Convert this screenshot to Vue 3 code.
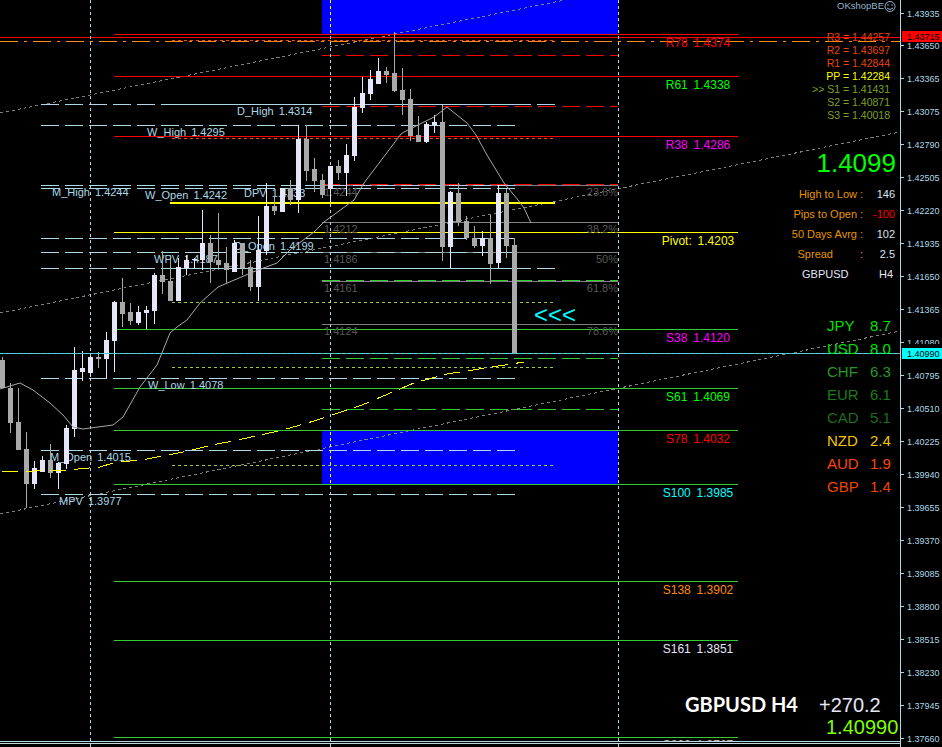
<script setup>
// levels: y, from, to, colour, dash pattern (empty = solid), width
const DASH = '18 6'
const DOT = '3 3'
const levels = [
  // fibonacci greys
  [185.5, 322, 618, '#808080', ''], [222.5, 322, 618, '#808080', ''], [252.5, 322, 618, '#808080', ''],
  [281.5, 322, 618, '#808080', ''], [324.5, 322, 618, '#808080', ''],
  // highs / lows / opens
  [104.5, 41, 161, '#add8e6', DASH], [104.5, 161, 531, '#add8e6', ''], [104.5, 537, 555, '#add8e6', ''],
  [125.5, 41, 515, '#add8e6', DASH], [185.5, 41, 515, '#add8e6', DASH], [188.5, 41, 515, '#add8e6', DASH],
  [238.5, 41, 515, '#add8e6', DASH], [252.5, 41, 515, '#add8e6', DASH],
  [268.5, 41, 161, '#add8e6', DASH], [268.5, 161, 531, '#add8e6', ''], [268.5, 537, 555, '#add8e6', ''],
  [378.5, 41, 515, '#add8e6', DASH], [450.5, 41, 515, '#add8e6', DASH], [494.5, 41, 515, '#add8e6', DASH],
  // reds
  [34.5, 114, 738, '#ff0000', ''], [37.5, 0, 900, '#ff0000', ''], [76.5, 114, 738, '#ff0000', ''],
  [136.5, 114, 738, '#ff0000', ''], [55.5, 322, 618, '#ff0000', DASH], [106.5, 322, 618, '#ff0000', DASH],
  [184.5, 322, 618, '#ff0000', DASH],
  [41.5, 0, 900, '#ff8c1a', '18 6 3 6'], [40.5, 172, 555, '#ff4500', DOT], [138.5, 172, 555, '#ff4500', DOT],
  // yellows
  [203, 170, 555, '#ffff00', '', 2], [232.5, 114, 738, '#ffff00', ''],
  [302.5, 172, 555, '#9acd32', DOT], [367.5, 322, 555, '#9acd32', DOT], [367.5, 172, 322, '#9acd32', DOT],
  [465.5, 172, 555, '#9acd32', DOT],
  // greens
  [280.5, 322, 618, '#32cd32', DASH], [358.5, 322, 618, '#32cd32', DASH], [409.5, 322, 618, '#32cd32', DASH],
  [329.5, 114, 738, '#32cd32', ''], [388.5, 114, 738, '#32cd32', ''], [430.5, 114, 738, '#32cd32', ''],
  [484.5, 114, 738, '#32cd32', ''], [581.5, 114, 738, '#32cd32', ''], [640.5, 114, 738, '#32cd32', ''],
  [737.5, 114, 738, '#32cd32', ''],
]

const trends = [
  [0, 113, 565, 0], [0, 313, 900, 132], [0, 514, 900, 331],
]

// names right on the chart, under the candles
const leftLabels = [
  ['D_High 1.4314', 237, 115], ['W_High 1.4295', 147, 136], ['M_High 1.4244', 52, 196],
  ['W_Open 1.4242', 145, 199], ['DPV 1.4233', 244, 197], ['D_Open 1.4199', 234, 250],
  ['WPV 1.4187', 154, 263], ['W_Low 1.4078', 148, 389], ['M_Open 1.4015', 50, 461],
  ['MPV 1.3977', 59, 505],
]

const fibs = [
  ['1.4244', '23.6%', 196], ['1.4212', '38.2%', 233], ['1.4186', '50%', 263],
  ['1.4161', '61.8%', 292], ['1.4124', '78.6%', 335],
]

const pivots = [
  ['R78 1.4374', 47, '#ff0000'], ['R61 1.4338', 89, '#00ff00'], ['R38 1.4286', 149, '#ff00ff'],
  ['Pivot: 1.4203', 245, '#ffff00'], ['S38 1.4120', 342, '#ff00ff'], ['S61 1.4069', 401, '#00ff00'],
  ['S78 1.4032', 443, '#ff0000'], ['S100 1.3985', 497, '#00ffff'], ['S138 1.3902', 594, '#ff8c00'],
  ['S161 1.3851', 653, '#e6e6fa'], ['S200 1.3767', 749, '#d2b48c'],
]

// scale labels, one every 33px or so
const scale = [
  '1.43935', '1.43650', '1.43365', '1.43075', '1.42790', '1.42505', '1.42220', '1.41935',
  '1.41650', '1.41365', '1.41080', '1.40795', '1.40510', '1.40225', '1.39940', '1.39655',
  '1.39370', '1.39085', '1.38800', '1.38515', '1.38230', '1.37945', '1.37660',
].map((text, i) => ({ text, y: Math.round(12.5 + i * 32.98) + 0.5 }))

// kind, body top, body bottom, wick top, wick bottom (first at x=2, every 8px)
const rows = [
  ['g', 360, 388, 357, 388], ['g', 388, 423, 383, 433], ['g', 422, 450, 388, 450], ['g', 449, 484, 432, 508],
  ['w', 468, 484, 461, 489], ['w', 460, 472, 456, 472], ['g', 460, 473, 444, 478], ['w', 463, 473, 462, 489],
  ['w', 428, 464, 425, 469], ['w', 370, 429, 347, 437], ['w', 368, 372, 351, 381], ['w', 357, 373, 356, 377],
  ['g', 357, 359, 352, 368], ['w', 340, 359, 332, 378], ['w', 302, 341, 301, 372], ['g', 302, 314, 278, 327],
  ['g', 312, 321, 303, 325], ['w', 312, 323, 306, 325], ['w', 310, 313, 306, 329], ['w', 275, 311, 273, 324],
  ['g', 275, 282, 251, 294], ['g', 281, 301, 255, 301], ['w', 267, 301, 258, 301], ['w', 260, 268, 255, 275],
  ['w', 259, 260, 258, 268], ['w', 243, 260, 210, 270], ['g', 243, 262, 235, 283], ['g', 260, 265, 213, 268],
  ['g', 263, 270, 247, 283], ['w', 243, 272, 240, 272], ['g', 243, 268, 243, 275], ['g', 267, 287, 260, 291],
  ['w', 250, 287, 216, 301], ['w', 206, 251, 183, 255], ['g', 206, 211, 197, 215], ['w', 188, 212, 188, 212],
  ['g', 188, 200, 180, 205], ['w', 139, 200, 125, 213], ['g', 139, 171, 125, 181], ['g', 169, 181, 158, 192],
  ['g', 180, 195, 174, 198], ['w', 166, 189, 166, 203], ['g', 166, 173, 160, 180], ['w', 155, 173, 144, 196],
  ['w', 107, 156, 97, 161], ['w', 93, 108, 77, 113], ['w', 79, 94, 70, 100], ['w', 71, 84, 58, 84],
  ['g', 71, 75, 67, 83], ['g', 73, 91, 32, 92], ['g', 90, 100, 68, 115], ['g', 99, 136, 89, 141],
  ['g', 135, 142, 116, 142], ['w', 124, 142, 122, 143], ['w', 122, 125, 115, 133], ['g', 122, 247, 105, 261],
  ['w', 192, 247, 191, 268], ['g', 193, 222, 183, 226], ['g', 221, 238, 216, 240], ['g', 238, 246, 226, 248],
  ['w', 238, 246, 231, 256], ['g', 238, 264, 215, 284], ['w', 193, 263, 185, 268], ['g', 193, 246, 189, 258],
  ['g', 245, 353, 238, 353],
]
const candles = rows.map((r, i) => ({
  x: 2 + i * 8, color: r[0] === 'w' ? '#e6e6fa' : '#a9a9a9', top: r[1], bottom: r[2], high: r[3], low: r[4],
}))

const maLine = '0,389 10,386 20,383 33,390 50,403 63,415 73,427 83,429 113,425 123,417 140,387 157,365 170,333 177,327 187,320 200,303 218,287 253,272 277,263 290,250 314,232 324,222 354,200 364,183 401,134 404,132 434,117 447,107 467,123 476,135 487,155 504,183 518,200 524,208 531,223'
const yellowLine = '2,472 67,470 100,467 113,463 147,459 183,452 217,444 233,441 283,430 307,423 314,421 362,405 414,383 447,374 524,362'

const pivotList = [
  ['R3 = 1.44257', 'res'], ['R2 = 1.43697', 'res'], ['R1 = 1.42844', 'res'], ['PP = 1.42284', 'pp'],
  ['>> S1 = 1.41431', 'sup'], ['S2 = 1.40871', 'sup'], ['S3 = 1.40018', 'sup'],
]

const stats = [
  { label: 'High to Low', value: '146' },
  { label: 'Pips to Open', value: '-100', neg: true },
  { label: '50 Days Avrg', value: '102' },
  { label: 'Spread', value: '2.5', short: true },
]

const strength = [
  ['JPY', '8.7', '#00e000'], ['USD', '8.0', '#00e000'], ['CHF', '6.3', '#229a22'], ['EUR', '6.1', '#1c7a1c'],
  ['CAD', '5.1', '#1c6e1c'], ['NZD', '2.4', '#f5c400'], ['AUD', '1.9', '#ff4500'], ['GBP', '1.4', '#f04500'],
]
</script>

<template>
  <div class="chart">
    <svg class="plot" width="942" height="747" viewBox="0 0 942 747">
      <rect x="322" y="0" width="296" height="34" fill="#0000ff" />
      <rect x="322" y="431" width="296" height="53" fill="#0000ff" />

      <g class="lines">
        <line v-for="(t, i) in trends" :key="'t' + i" :x1="t[0]" :y1="t[1]" :x2="t[2]" :y2="t[3]" stroke="#808080" stroke-dasharray="3 3" />
        <line v-for="(l, i) in levels" :key="'l' + i" :x1="l[1]" :x2="l[2]" :y1="l[0]" :y2="l[0]" :stroke="l[3]" :stroke-dasharray="l[4] || null" :stroke-width="l[5] || 1" />
      </g>

      <text v-for="l in leftLabels" :key="l[0]" class="name" :x="l[1]" :y="l[2]">{{ l[0] }}</text>
      <g v-for="f in fibs" :key="f[0]" class="fib">
        <text x="324" :y="f[2]">{{ f[0] }}</text>
        <text x="618" :y="f[2]" text-anchor="end">{{ f[1] }}</text>
      </g>
      <text v-for="p in pivots" :key="p[0]" class="level" x="698" :y="p[1]" :fill="p[2]" text-anchor="middle">{{ p[0] }}</text>

      <!-- bottom edge of the window hides the last label -->
      <rect x="0" y="742" width="900" height="5" fill="#000" />
      <line x1="0" x2="900" y1="741.5" y2="741.5" stroke="#add8e6" />
      <line x1="0" x2="900" y1="743.5" y2="743.5" stroke="#c4d4d8" />

      <g class="lines">
        <line x1="90.5" x2="90.5" y1="0" y2="747" stroke="#add8e6" stroke-dasharray="3 3" />
        <line x1="330.5" x2="330.5" y1="0" y2="747" stroke="#add8e6" stroke-dasharray="3 3" />
        <line x1="330.5" x2="330.5" y1="0" y2="34" stroke="#ffff00" stroke-dasharray="3 3" />
        <line x1="330.5" x2="330.5" y1="432" y2="484" stroke="#ffff00" stroke-dasharray="3 3" />
        <line x1="618.5" x2="618.5" y1="0" y2="747" stroke="#add8e6" stroke-dasharray="3 3" />
      </g>

      <g v-for="c in candles" :key="c.x" class="lines">
        <rect :x="c.x" :y="c.high" width="1" :height="c.low - c.high" :fill="c.color" />
        <rect :x="c.x - 2" :y="c.top" width="5" :height="c.bottom - c.top" :fill="c.color" />
      </g>

      <polyline :points="maLine" fill="none" stroke="#a9a9a9" />
      <polyline class="lines" :points="yellowLine" fill="none" stroke="#ffff00" stroke-dasharray="16 8" />

      <g class="lines">
        <line x1="0" x2="900" y1="353.5" y2="353.5" stroke="#a0a0a0" />
        <line x1="0" x2="900" y1="353.5" y2="353.5" stroke="#00ffff" stroke-dasharray="3 3" />
        <line x1="900.5" x2="900.5" y1="0" y2="747" stroke="#add8e6" />
        <line v-for="s in scale" :key="s.text" x1="900" x2="904" :y1="s.y" :y2="s.y" stroke="#add8e6" />
      </g>
      <text v-for="s in scale" :key="'s' + s.text" class="tick" x="907" :y="s.y + 3.5">{{ s.text }}</text>

      <!-- current price and last high tags -->
      <rect x="901" y="344" width="41" height="17" fill="#000" />
      <rect x="902" y="348" width="40" height="11" fill="#00ffff" />
      <text class="tick tag" x="907" y="357">1.40990</text>
      <rect x="902" y="31" width="40" height="11" fill="#ff0000" />
      <text class="tick tag" x="907" y="40">1.43715</text>

      <text class="arrows" x="534" y="323">&lt;&lt;&lt;</text>

      <text class="brand" x="837" y="9">OKshopBE</text>
      <g fill="none" stroke="#8fb4d0">
        <circle cx="890" cy="6.5" r="5" />
        <path d="M887 8 Q890 11 893 8" />
      </g>
      <circle cx="888" cy="5" r="0.8" fill="#8fb4d0" />
      <circle cx="892" cy="5" r="0.8" fill="#8fb4d0" />

      <text class="pair" x="685" y="712">GBPUSD H4</text>
      <text class="gain" x="819" y="712">+270.2</text>
      <text class="last" x="826" y="734">1.40990</text>
    </svg>

    <div class="pivots">
      <div v-for="p in pivotList" :key="p[0]" :class="p[1]">{{ p[0] }}</div>
    </div>

    <div class="price">1.4099</div>

    <div class="stats">
      <template v-for="s in stats" :key="s.label">
        <span class="stats__label" :class="{ 'stats__label--short': s.short }">{{ s.label }}</span>
        <span class="stats__colon">:</span>
        <span class="stats__value" :class="{ 'stats__value--neg': s.neg }">{{ s.value }}</span>
      </template>
      <span class="stats__pair">GBPUSD</span>
      <span></span>
      <span class="stats__tf">H4</span>
    </div>

    <div class="strength">
      <template v-for="s in strength" :key="s[0]">
        <span :style="{ color: s[2] }">{{ s[0] }}</span>
        <span :style="{ color: s[2] }">{{ s[1] }}</span>
      </template>
    </div>
  </div>
</template>

<style>
html, body {
  margin: 0;
  background: #000;
}
</style>

<style scoped>
.chart {
  position: relative;
  width: 942px;
  height: 747px;
  background: #000;
  overflow: hidden;
  font-family: "Liberation Sans", Arial, sans-serif;
}

.plot {
  display: block;
  font-family: "Liberation Sans", Arial, sans-serif;
}

.lines { shape-rendering: crispEdges; }

.name { font-size: 11px; fill: #add8e6; word-spacing: 2px; }
.fib text { font-size: 11px; fill: #585858; }
.level { font-size: 12px; word-spacing: 2.5px; }
.tick { font-size: 9px; fill: #add8e6; }
.tag { fill: #000; }
.arrows { font-size: 24px; fill: #00ffff; }
.brand { font-size: 9.5px; fill: #8fb4d0; }
.pair { font-family: Lato, sans-serif; font-size: 20px; font-weight: 700; fill: #fff; }
.gain { font-size: 20px; fill: #e6e6fa; }
.last { font-size: 20px; fill: #7fff00; }

/* ── Pivot list ────────────────────────────────── */
.pivots {
  position: absolute;
  top: 31px;
  right: 52px;
  display: flex;
  flex-direction: column;
  align-items: flex-end;
  font-size: 10.5px;
  line-height: 13px;
}
.res { color: #e8450a; }
.pp { color: #ffff00; }
.sup { color: #7fa020; }

.price {
  position: absolute;
  top: 148px;
  right: 46px;
  font-size: 26px;
  line-height: 30px;
  color: #00ff00;
}

/* ── Stats ─────────────────────────────────────── */
.stats {
  position: absolute;
  top: 184px;
  left: 790px;
  display: grid;
  grid-template-columns: 67px 9px 29px;
  grid-auto-rows: 20px;
  align-items: center;
  font-size: 11px;
}
.stats__label { text-align: right; color: #e69500; }
.stats__label--short { margin-right: 24px; }
.stats__colon { color: #e69500; text-align: center; }
.stats__value { text-align: right; color: #d8e4f4; }
.stats__value--neg { color: #ff0000; }
.stats__pair { color: #e6e6fa; padding-left: 12px; }
.stats__tf { color: #e6e6fa; text-align: right; padding-right: 2px; }

/* ── Currency strength ─────────────────────────── */
.strength {
  position: absolute;
  top: 314px;
  left: 827px;
  display: grid;
  grid-template-columns: 43px auto;
  grid-auto-rows: 23px;
  align-items: center;
  font-size: 15px;
}
</style>
